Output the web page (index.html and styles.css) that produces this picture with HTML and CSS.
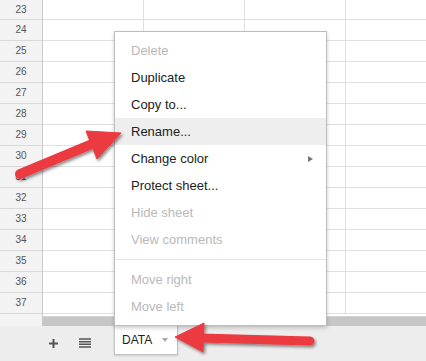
FILE: index.html
```html
<!DOCTYPE html>
<html>

<head>
    <title>Sheet menu</title>
    <link rel="stylesheet" href="styles.css">
</head>

<body>
    <div id="sheet">
        <div id="grid">
            <div class="row first"><div class="num">23</div><div class="cell"></div><div class="cell"></div><div class="cell"></div><div class="cell"></div></div>
            <div class="row"><div class="num">24</div><div class="cell"></div><div class="cell"></div><div class="cell"></div><div class="cell"></div></div>
            <div class="row"><div class="num">25</div><div class="cell"></div><div class="cell"></div><div class="cell"></div><div class="cell"></div></div>
            <div class="row"><div class="num">26</div><div class="cell"></div><div class="cell"></div><div class="cell"></div><div class="cell"></div></div>
            <div class="row"><div class="num">27</div><div class="cell"></div><div class="cell"></div><div class="cell"></div><div class="cell"></div></div>
            <div class="row"><div class="num">28</div><div class="cell"></div><div class="cell"></div><div class="cell"></div><div class="cell"></div></div>
            <div class="row"><div class="num">29</div><div class="cell"></div><div class="cell"></div><div class="cell"></div><div class="cell"></div></div>
            <div class="row"><div class="num">30</div><div class="cell"></div><div class="cell"></div><div class="cell"></div><div class="cell"></div></div>
            <div class="row"><div class="num">31</div><div class="cell"></div><div class="cell"></div><div class="cell"></div><div class="cell"></div></div>
            <div class="row"><div class="num">32</div><div class="cell"></div><div class="cell"></div><div class="cell"></div><div class="cell"></div></div>
            <div class="row"><div class="num">33</div><div class="cell"></div><div class="cell"></div><div class="cell"></div><div class="cell"></div></div>
            <div class="row"><div class="num">34</div><div class="cell"></div><div class="cell"></div><div class="cell"></div><div class="cell"></div></div>
            <div class="row"><div class="num">35</div><div class="cell"></div><div class="cell"></div><div class="cell"></div><div class="cell"></div></div>
            <div class="row"><div class="num">36</div><div class="cell"></div><div class="cell"></div><div class="cell"></div><div class="cell"></div></div>
            <div class="row"><div class="num">37</div><div class="cell"></div><div class="cell"></div><div class="cell"></div><div class="cell"></div></div>
        </div>

        <div id="hscroll">
            <div class="hscroll-corner"></div>
            <div class="hscroll-track"><div class="hscroll-thumb"></div></div>
        </div>

        <div id="sheet-bar">
            <span class="bar-button">
                <svg width="9" height="9" viewBox="0 0 9 9"><path d="M4.5 0v9M0 4.5h9" stroke="#555" stroke-width="2" /></svg>
            </span>
            <span class="bar-button">
                <svg width="12" height="10" viewBox="0 0 12 10"><path d="M0 1h12M0 3.7h12M0 6.3h12M0 9h12" stroke="#555" stroke-width="1.4" /></svg>
            </span>
            <div class="tab">
                DATA
                <span class="tab-caret"></span>
            </div>
        </div>

        <div id="tab-menu">
            <div class="item disabled">Delete</div>
            <div class="item">Duplicate</div>
            <div class="item">Copy to...</div>
            <div class="item active">Rename...</div>
            <div class="item">Change color <span class="submenu"></span></div>
            <div class="item">Protect sheet...</div>
            <div class="item disabled">Hide sheet</div>
            <div class="item disabled">View comments</div>
            <div class="separator"></div>
            <div class="item disabled">Move right</div>
            <div class="item disabled">Move left</div>
        </div>

        <svg id="arrows" width="426" height="361" viewBox="0 0 426 361">
            <defs>
                <filter id="arrow-shadow" x="-20%" y="-20%" width="140%" height="160%">
                    <feDropShadow dx="1.5" dy="2" stdDeviation="1.4" flood-color="#000" flood-opacity="0.45" />
                </filter>
            </defs>
            <g fill="#ec3a40" stroke="#ec3a40" filter="url(#arrow-shadow)">
                <line x1="20" y1="174" x2="92" y2="144" stroke-width="10" stroke-linecap="round" />
                <polygon points="121,133 86,131 97,159" stroke-width="1" stroke-linejoin="round" />
                <line x1="310" y1="341" x2="200" y2="338" stroke-width="9" stroke-linecap="round" />
                <polygon points="175,337 204,323 203,352" stroke-width="1" stroke-linejoin="round" />
            </g>
        </svg>
    </div>
</body>

</html>
```

FILE: styles.css
```css
body {
    margin: 0;
    padding: 0;
    font-family: "Liberation Sans", Arial, sans-serif;
}

#sheet {
    position: relative;
    width: 426px;
    height: 361px;
    overflow: hidden;
    background-color: #fff;
}

#grid {
    height: 314px;
    overflow: hidden;
}

.row {
    display: flex;
    height: 21px;
}

.row.first {
    height: 20px;
}

.num {
    flex: 0 0 43px;
    box-sizing: border-box;
    background-color: #f3f3f3;
    border-right: 1px solid #c9c9c9;
    border-bottom: 1px solid #d9d9d9;
    color: #555;
    font-size: 10px;
    text-align: center;
    line-height: 20px;
}

.cell {
    flex: 0 0 101px;
    box-sizing: border-box;
    border-right: 1px solid #e0e0e0;
    border-bottom: 1px solid #e0e0e0;
}

#hscroll {
    display: flex;
    height: 12px;
}

.hscroll-corner {
    flex: 0 0 43px;
    background-color: #f3f3f3;
    border-right: 1px solid #c9c9c9;
    box-sizing: border-box;
}

.hscroll-track {
    flex: 1;
    padding-top: 2px;
}

.hscroll-thumb {
    height: 9px;
    border-top: 1px solid #d4d4d4;
    background-color: #c6c6c6;
}

#sheet-bar {
    display: flex;
    align-items: flex-start;
    height: 35px;
    padding-left: 40px;
    background-color: #ededed;
}

.bar-button {
    display: inline-flex;
    align-items: center;
    justify-content: center;
    height: 34px;
    width: 27px;
    margin-right: 4px;
}

.tab {
    display: flex;
    align-items: center;
    box-sizing: border-box;
    margin-top: -1px;
    margin-left: 12px;
    height: 30px;
    width: 64px;
    padding-left: 7px;
    background-color: #fff;
    border: 1px solid #c4c4c4;
    border-top: none;
    box-shadow: 0 1px 2px rgba(0, 0, 0, 0.15);
    color: #222;
    font-size: 12px;
}

.tab-caret {
    margin-left: 10px;
    border-top: 4px solid #a8a8a8;
    border-left: 3.5px solid transparent;
    border-right: 3.5px solid transparent;
}

#tab-menu {
    position: absolute;
    left: 114px;
    top: 31px;
    width: 213px;
    box-sizing: border-box;
    padding: 5px 0;
    background-color: #fff;
    border: 1px solid #bdbdbd;
    box-shadow: 0 2px 4px rgba(0, 0, 0, 0.2);
    font-size: 13px;
    color: #222;
}

.item {
    display: flex;
    align-items: center;
    height: 27px;
    padding-left: 16px;
    padding-right: 13px;
}

.item.disabled {
    color: #b9b9b9;
}

.item.active {
    background-color: #eee;
}

.submenu {
    margin-left: auto;
    border-left: 5px solid #777;
    border-top: 3px solid transparent;
    border-bottom: 3px solid transparent;
}

.separator {
    height: 1px;
    margin: 6px 0;
    background-color: #e5e5e5;
}

#arrows {
    position: absolute;
    left: 0;
    top: 0;
    pointer-events: none;
}
```
